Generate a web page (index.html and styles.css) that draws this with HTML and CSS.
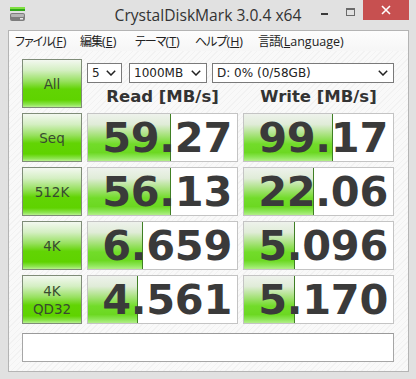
FILE: index.html
```html
<!DOCTYPE html>
<html lang="ja">
<head>
<meta charset="utf-8">
<title>CrystalDiskMark 3.0.4 x64</title>
<link rel="stylesheet" href="styles.css">
</head>
<body>
<div class="window">
  <div class="titlebar">
    <div class="tb-left">
      <svg class="app-icon" width="16" height="16" viewBox="0 0 16 16">
        <rect x="0" y="1" width="15" height="2" fill="#7fe040"/>
        <rect x="0" y="3" width="15" height="2" fill="#2fa81a"/>
        <rect x="0" y="7" width="15" height="8" rx="2" fill="#7d7d7d"/>
        <rect x="1" y="8" width="13" height="3" rx="1" fill="#b5b5b5"/>
        <rect x="10" y="12" width="3" height="1.5" fill="#e8e8e8"/>
      </svg>
    </div>
    <div class="title">CrystalDiskMark 3.0.4 x64</div>
    <div class="caption">
      <span class="cap-btn cap-min"><span class="min-bar"></span></span>
      <span class="cap-btn cap-max"><span class="max-box"></span></span>
      <span class="cap-btn cap-close">
        <svg width="10" height="10" viewBox="0 0 10 10"><path d="M1 1 L9 9 M9 1 L1 9" stroke="#fff" stroke-width="1.6" fill="none"/></svg>
      </span>
    </div>
  </div>
  <div class="client">
    <div class="menubar">
      <span class="menu-item m1">ファイル<span class="lat">(<u>F</u>)</span></span>
      <span class="menu-item m2">編集<span class="lat">(<u>E</u>)</span></span>
      <span class="menu-item m3">テーマ<span class="lat">(<u>T</u>)</span></span>
      <span class="menu-item m4">ヘルプ<span class="lat">(<u>H</u>)</span></span>
      <span class="menu-item m5">言語<span class="lat">(<u>L</u>anguage)</span></span>
    </div>
    <div class="content">
      <div class="grid">
        <div class="btn">All</div>
        <div class="topcell">
          <div class="selects">
            <div class="select s-count"><span>5</span><svg class="chev" width="10" height="6" viewBox="0 0 10 6"><path d="M0.8 0.8 L5 5 L9.2 0.8" stroke="#222" stroke-width="1.5" fill="none"/></svg></div>
            <div class="select s-size"><span>1000MB</span><svg class="chev" width="10" height="6" viewBox="0 0 10 6"><path d="M0.8 0.8 L5 5 L9.2 0.8" stroke="#222" stroke-width="1.5" fill="none"/></svg></div>
            <div class="select s-drive"><span>D: 0% (0/58GB)</span><svg class="chev" width="10" height="6" viewBox="0 0 10 6"><path d="M0.8 0.8 L5 5 L9.2 0.8" stroke="#222" stroke-width="1.5" fill="none"/></svg></div>
          </div>
          <div class="headers">
            <div class="hdr">Read [MB/s]</div>
            <div class="hdr">Write [MB/s]</div>
          </div>
        </div>

        <div class="btn">Seq</div>
        <div class="val"><div class="fill" style="width:83px"></div><span class="num">59.27</span></div>
        <div class="val"><div class="fill" style="width:89px"></div><span class="num">99.17</span></div>

        <div class="btn">512K</div>
        <div class="val"><div class="fill" style="width:83px"></div><span class="num">56.13</span></div>
        <div class="val"><div class="fill" style="width:70px"></div><span class="num">22.06</span></div>

        <div class="btn">4K</div>
        <div class="val"><div class="fill" style="width:55px"></div><span class="num">6.659</span></div>
        <div class="val"><div class="fill" style="width:51px"></div><span class="num">5.096</span></div>

        <div class="btn two">4K<br>QD32</div>
        <div class="val"><div class="fill" style="width:50px"></div><span class="num">4.561</span></div>
        <div class="val"><div class="fill" style="width:51px"></div><span class="num">5.170</span></div>
      </div>
      <div class="comment"></div>
    </div>
  </div>
</div>
</body>
</html>
```

FILE: styles.css
```css
* { box-sizing: border-box; }
html, body { margin: 0; padding: 0; }
body {
  width: 416px;
  height: 379px;
  overflow: hidden;
  background: #e1e1e1;
  font-family: "DejaVu Sans", Verdana, sans-serif;
}
.window {
  width: 416px;
  height: 379px;
  display: flex;
  flex-direction: column;
}
.titlebar {
  height: 30px;
  display: grid;
  grid-template-columns: 1fr auto 1fr;
  align-items: start;
}
.tb-left { padding: 6px 0 0 10px; }
.app-icon { display: block; }
.title {
  font-family: "Open Sans", "Noto Sans", sans-serif;
  font-size: 15.6px;
  color: #333;
  line-height: 30px;
  white-space: nowrap;
}
.caption {
  display: flex;
  justify-content: flex-end;
  padding-right: 7px;
}
.cap-btn {
  height: 20px;
  width: 26px;
  display: flex;
  justify-content: center;
}
.min-bar {
  margin-top: 13px;
  width: 7px;
  height: 2px;
  background: #3a3a3a;
}
.max-box {
  margin-top: 8px;
  width: 9px;
  height: 8px;
  border: 1px solid #6a6a6a;
  border-top-width: 2px;
}
.cap-close {
  width: 46px;
  background: #c75050;
  align-items: center;
}
.cap-close svg { display: block; }

.client {
  margin: 0 7px 0 8px;
  height: 342px;
  border: 1px solid #b4b4b4;
  display: flex;
  flex-direction: column;
}
.menubar {
  height: 20px;
  background: linear-gradient(#fdfdfd, #f6f6f6);
  display: flex;
  align-items: center;
  padding-left: 6px;
  font-family: "Noto Sans CJK JP", sans-serif;
  font-feature-settings: "palt" 1;
  font-size: 12px;
  letter-spacing: -1px;
  color: #222;
  white-space: nowrap;
}
.lat {
  font-family: "Open Sans", "Noto Sans", sans-serif;
  letter-spacing: 0;
  font-size: 12.5px;
}
.menu-item u { text-decoration: underline; text-underline-offset: 1px; }
.m1 { width: 65px; }
.m2 { width: 55px; }
.m3 { width: 60px; }
.m4 { width: 63px; }

.content {
  flex: 1;
  padding: 8px 0 0 13px;
  background:
    repeating-linear-gradient(135deg, #f9f9f9 0px, #f9f9f9 3px, #f2f2f2 3px, #f2f2f2 4px);
}
.grid {
  display: grid;
  grid-template-columns: 60px 151px 151px;
  grid-auto-rows: 49px;
  gap: 5px;
}
.btn {
  border: 1px solid #7f8c78;
  background: linear-gradient(#f3f8f0 0%, #d4efc2 22%, #98e160 45%, #62d404 62%, #5fd300 85%, #8ee552 95%, #b9f090 100%);
  display: flex;
  align-items: center;
  justify-content: center;
  text-align: center;
  font-size: 13.5px;
  color: #384a30;
  line-height: 18px;
}
.topcell {
  grid-column: 2 / 4;
  display: flex;
  flex-direction: column;
}
.selects {
  margin-top: 4px;
  height: 20px;
  display: flex;
  gap: 7px;
}
.select {
  height: 20px;
  border: 1px solid #7a7a7a;
  background: #fff;
  display: flex;
  align-items: center;
  justify-content: space-between;
  padding: 0 5px 0 4px;
  font-size: 12px;
  color: #222;
}
.s-count { width: 35px; }
.s-size { width: 78px; }
.s-drive { flex: 1; margin-left: -2px; }
.chev { display: block; }
.headers {
  flex: 1;
  display: grid;
  grid-template-columns: 151px 151px;
  gap: 5px;
  align-items: center;
}
.hdr {
  text-align: center;
  font-weight: bold;
  font-size: 16.5px;
  color: #333;
  padding-top: 2px;
}
.val {
  position: relative;
  border: 1px solid #c4c4c4;
  background: #fff;
  display: flex;
  align-items: center;
  justify-content: flex-end;
  padding-right: 5px;
}
.fill {
  position: absolute;
  left: 0;
  top: 0;
  bottom: 0;
  border-right: 1px solid #3f7f24;
  background: linear-gradient(#eef2ec 0%, #e0ecd8 22%, #a6e27a 45%, #72dc2a 64%, #6cd822 82%, #8ce656 92%, #b2ee88 100%);
}
.num {
  position: relative;
  font-weight: bold;
  font-size: 41.5px;
  line-height: 1;
  color: #3a3a3a;
  letter-spacing: -0.3px;
}
.comment {
  margin-top: 9px;
  width: 372px;
  height: 29px;
  border: 1px solid #a6a6a6;
  border-top-color: #9a9a9a;
  background: #fff;
}
```
